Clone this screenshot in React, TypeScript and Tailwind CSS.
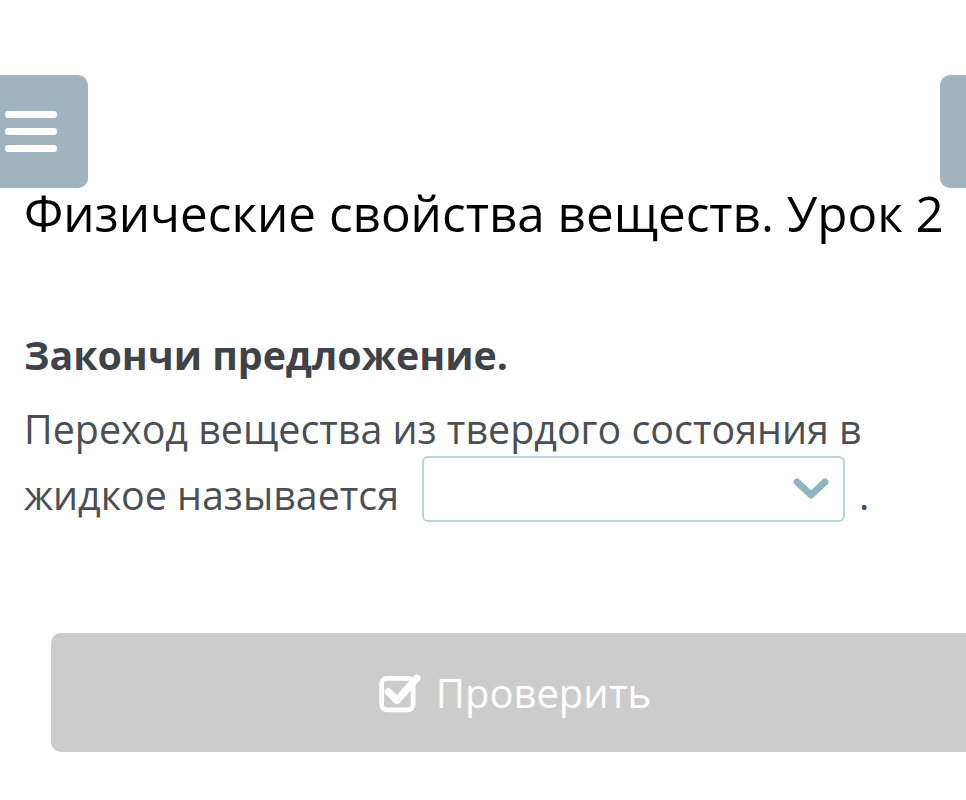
import React from "react";

export default function App() {
  return (
    <div className="w-[966px] h-[800px] bg-white overflow-hidden relative" style={{ fontFamily: "'Open Sans', sans-serif" }}>
      <div className="flex justify-between pt-[75px]">
        <div className="w-[88px] h-[113px] bg-[#a0b4c0] rounded-r-[10px] flex flex-col justify-center gap-[10px] pl-[5px]">
          <div className="w-[52px] h-[7px] bg-white rounded-[3px]" />
          <div className="w-[52px] h-[7px] bg-white rounded-[3px]" />
          <div className="w-[52px] h-[7px] bg-white rounded-[3px]" />
        </div>
        <div className="w-[26px] h-[113px] bg-[#a0b4c0] rounded-l-[10px]" />
      </div>
      <h1 className="pl-[24px] mt-[-5px] text-[49.4px] leading-[60px] text-black whitespace-nowrap">
        Физические свойства веществ. Урок 2
      </h1>
      <div className="pl-[24px] mt-[88px] text-[39.3px] leading-[48px] font-bold text-[#3e4349] whitespace-nowrap">
        Закончи предложение.
      </div>
      <div className="pl-[24px] mt-[17px] text-[39.4px] leading-[66px] text-[#4a4f55] whitespace-nowrap">
        <div>Переход вещества из твердого состояния в</div>
        <div className="flex items-start">
          <span>жидкое называется</span>
          <div className="ml-[23px] mt-[-6px] w-[423px] h-[66px] border-2 border-[#bcd3d8] rounded-[6px] flex items-center justify-end pr-[14px]">
            <svg width="36" height="24" viewBox="0 0 36 24">
              <path d="M4 5 L18 18 L32 5" fill="none" stroke="#8fb6bf" strokeWidth="7" strokeLinecap="round" strokeLinejoin="round" />
            </svg>
          </div>
          <span className="ml-[14px]">.</span>
        </div>
      </div>
      <div className="ml-[51px] mt-[105px] w-[940px] h-[119px] bg-[#cccccc] rounded-[10px] flex items-center justify-center pr-[12px] gap-[15px] text-white">
        <svg width="42" height="40" viewBox="0 0 40 38">
          <rect x="2.5" y="5" width="30" height="30" rx="5" fill="none" stroke="white" strokeWidth="4.5" />
          <path d="M9 18 L17 26 L36 5" fill="none" stroke="white" strokeWidth="7" strokeLinecap="round" strokeLinejoin="round" />
        </svg>
        <span className="text-[40px] leading-none">Проверить</span>
      </div>
    </div>
  );
}
